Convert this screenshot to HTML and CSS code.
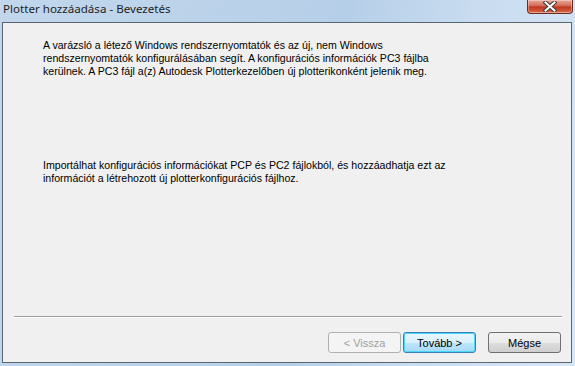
FILE: index.html
```html
<!DOCTYPE html>
<html>
<head>
<meta charset="utf-8">
<link rel="stylesheet" href="styles.css">
</head>
<body>
<div class="window">
  <div class="titlebar">
    <span class="title">Plotter hozzáadása - Bevezetés</span>
    <div class="close">
      <svg width="14" height="11" viewBox="0 0 14 11">
        <path d="M2.5 1.5 L11.5 9.5 M11.5 1.5 L2.5 9.5" stroke="#3c3c3c" stroke-width="4" stroke-linecap="square"/>
        <path d="M2.5 1.5 L11.5 9.5 M11.5 1.5 L2.5 9.5" stroke="#ffffff" stroke-width="2" stroke-linecap="square"/>
      </svg>
    </div>
  </div>
  <div class="client">
    <div class="content">
      <p class="para">A varázsló a létező Windows rendszernyomtatók és az új, nem Windows<br>rendszernyomtatók konfigurálásában segít. A konfigurációs információk PC3 fájlba<br>kerülnek. A PC3 fájl a(z) Autodesk Plotterkezelőben új plotterikonként jelenik meg.</p>
      <p class="para second">Importálhat konfigurációs információkat PCP és PC2 fájlokból, és hozzáadhatja ezt az<br>információt a létrehozott új plotterkonfigurációs fájlhoz.</p>
    </div>
    <div class="footer">
      <div class="separator"></div>
      <div class="buttons">
        <button class="btn disabled">&lt; Vissza</button>
        <button class="btn default">Tovább &gt;</button>
        <button class="btn cancel">Mégse</button>
      </div>
    </div>
  </div>
</div>
</body>
</html>
```
FILE: styles.css
```css
html, body {
  margin: 0;
  padding: 0;
}
body {
  width: 575px;
  height: 366px;
  overflow: hidden;
}
.window {
  width: 575px;
  height: 366px;
  background: linear-gradient(100deg, #c2d7ec 0%, #b6cfe8 55%, #c9dcf0 75%, #d7e6f5 100%);
  display: flex;
  flex-direction: column;
}
.titlebar {
  height: 22px;
  display: flex;
  align-items: flex-start;
  flex: none;
}
.title {
  font-family: "Noto Sans", sans-serif;
  font-size: 11.6px;
  color: #1e1e1e;
  margin-left: 3px;
  margin-top: 1px;
  line-height: 16px;
}
.close {
  margin-left: auto;
  margin-right: 2px;
  width: 46px;
  height: 14px;
  box-sizing: border-box;
  border: 1px solid #6b2d22;
  border-top: none;
  border-radius: 0 0 4px 4px;
  background: linear-gradient(to bottom, #e8a595 0%, #d6735f 40%, #c0391f 55%, #d1553a 85%, #e07a5a 100%);
  box-shadow: inset 0 0 0 1px rgba(255,255,255,0.35);
  display: flex;
  align-items: center;
  justify-content: center;
}
.close svg {
  display: block;
  margin-top: -1px;
}
.client {
  flex: none;
  margin: 0 3px 0 2px;
  height: 341px;
  box-sizing: border-box;
  border: 1px solid #5b6673;
  background: #f0f0f0;
  display: flex;
  flex-direction: column;
}
.content {
  flex: 1;
  padding: 16px 20px 0 40px;
}
.para {
  margin: 0;
  font-family: "Liberation Sans", Arial, sans-serif;
  font-size: 10.6px;
  line-height: 13px;
  color: #000;
  white-space: nowrap;
}
.second {
  margin-top: 81px;
}
.footer {
  padding: 0 9px 9px 11px;
}
.separator {
  height: 0;
  border-top: 1px solid #a0a0a0;
  border-bottom: 1px solid #ffffff;
}
.buttons {
  display: flex;
  justify-content: flex-end;
  gap: 2px;
  margin-top: 14px;
  margin-right: 1px;
}
.btn {
  width: 73px;
  height: 21px;
  box-sizing: border-box;
  font-family: "Liberation Sans", Arial, sans-serif;
  font-size: 11px;
  color: #000;
  border: 1px solid #707070;
  border-radius: 3px;
  background: linear-gradient(to bottom, #f2f2f2 0%, #ebebeb 50%, #dddddd 51%, #cfcfcf 100%);
  padding: 0;
}
.btn.disabled {
  color: #a0a0a0;
  border-color: #adb2b5;
  background: #f4f4f4;
}
.btn.default {
  border-color: #3c7fb1;
  background: linear-gradient(to bottom, #eaf6fd 0%, #d9f0fc 50%, #bee6fd 51%, #a7d9f5 100%);
  box-shadow: inset 0 0 0 1px #48d8fe;
}
.btn.cancel {
  margin-left: 10px;
}
```
